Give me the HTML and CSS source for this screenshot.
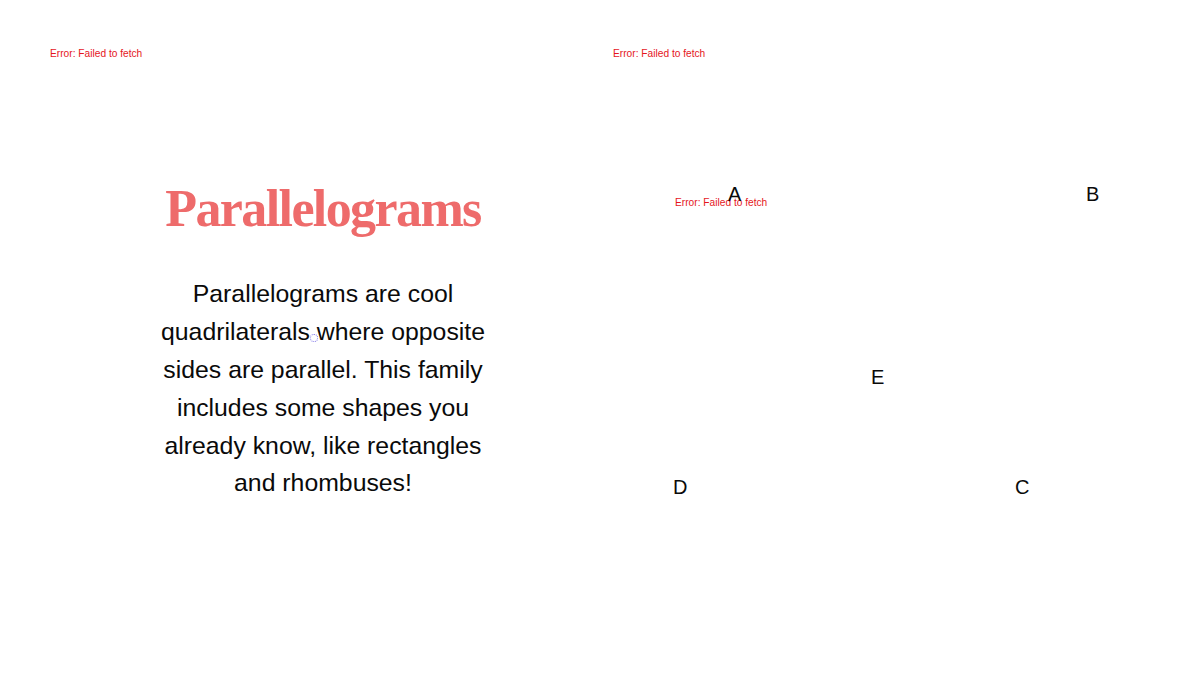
FILE: index.html
```html
<!DOCTYPE html>
<html lang="en">
<head>
    <meta charset="UTF-8">
    <meta name="viewport" content="width=device-width, initial-scale=1.0">
    <title>Parallelograms</title>
    <link rel="stylesheet" href="styles.css">
</head>
<body>
    <div class="page">
        <section class="intro-panel">
            <p class="fetch-error">Error: Failed to fetch</p>
            <h1 class="title">Parallelograms</h1>
            <div class="lead-wrap">
                <p class="lead">Parallelograms are cool quadrilaterals where opposite sides are parallel. This family includes some shapes you already know, like rectangles and rhombuses!</p>
                <span class="spinner"></span>
            </div>
        </section>

        <section class="shape-panel">
            <p class="fetch-error">Error: Failed to fetch</p>
            <div class="shape-canvas">
                <p class="fetch-error canvas-error">Error: Failed to fetch</p>
                <span class="vertex vertex-a">A</span>
                <span class="vertex vertex-b">B</span>
                <span class="vertex vertex-e">E</span>
                <span class="vertex vertex-d">D</span>
                <span class="vertex vertex-c">C</span>
            </div>
        </section>
    </div>
</body>
</html>
```

FILE: styles.css
```css
* { margin: 0; padding: 0; box-sizing: border-box; }
body {
    font-family: 'Liberation Sans', Arial, sans-serif;
    background: #fff;
    color: #0a0a0a;
}
.page {
    display: grid;
    grid-template-columns: 546px 537px;
    column-gap: 17px;
    padding: 0 50px;
    min-height: 675px;
}
.fetch-error {
    font-size: 10.2px;
    line-height: 12px;
    color: #e5161d;
    margin-top: 48px;
}
.intro-panel { display: flex; flex-direction: column; align-items: center; }
.intro-panel .fetch-error { align-self: flex-start; }
.title {
    font-family: 'Liberation Serif', 'DejaVu Serif', serif;
    font-weight: 700;
    font-size: 52px;
    line-height: 1.2;
    letter-spacing: -1.6px;
    color: #ee6b6b;
    margin-top: 118px;
}
.lead-wrap { position: relative; margin-top: 35px; }
.lead {
    width: 346px;
    font-size: 24.8px;
    line-height: 37.8px;
    text-align: center;
    color: #0a0a0a;
}
.spinner {
    position: absolute;
    left: 160px;
    top: 59px;
    width: 8px;
    height: 8px;
    border: 1px dotted #7a6fe6;
    border-radius: 50%;
}
.shape-panel { position: relative; }
.shape-canvas { position: absolute; inset: 0; }
.canvas-error { position: absolute; left: 62px; top: 197px; margin: 0; }
.vertex {
    position: absolute;
    font-size: 20px;
    line-height: 24px;
    color: #0a0a0a;
}
.vertex-a { left: 115px; top: 182px; }
.vertex-b { left: 473px; top: 182px; }
.vertex-e { left: 258px; top: 365px; }
.vertex-d { left: 60px; top: 475px; }
.vertex-c { left: 402px; top: 475px; }
```
